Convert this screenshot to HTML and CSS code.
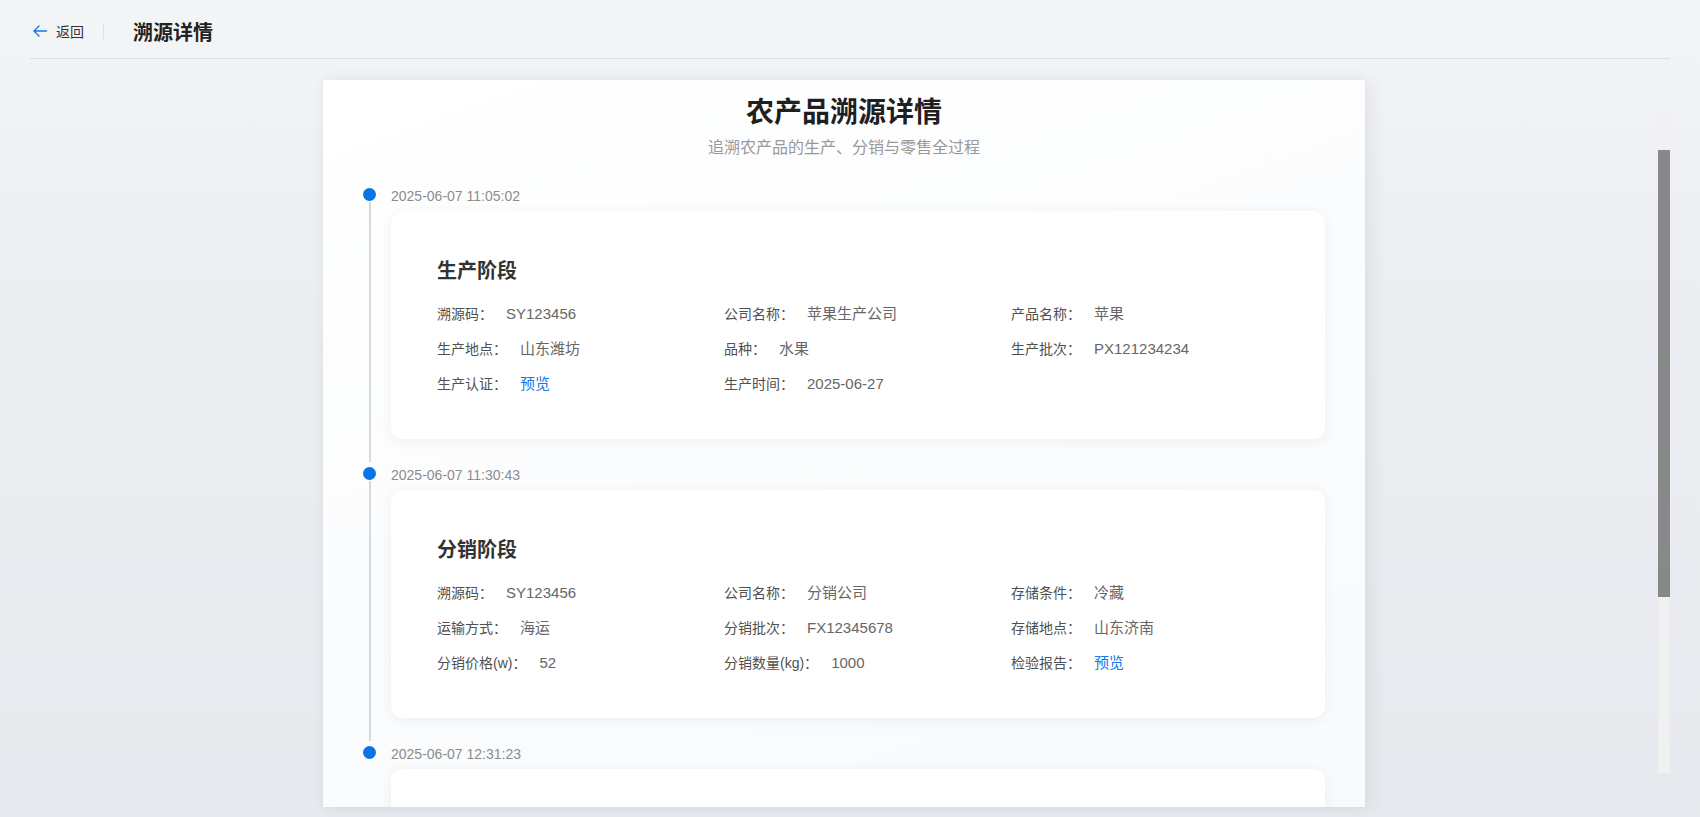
FILE: index.html
```html
<!DOCTYPE html>
<html lang="zh-CN">
<head>
<meta charset="utf-8">
<title>溯源详情</title>
<link rel="stylesheet" href="styles.css">
</head>
<body>
<div class="page">
  <header class="topbar">
    <a class="back">
      <svg class="back-icon" viewBox="0 0 16 16" width="16" height="16"><path d="M14.5 8H2M7 3L2 8l5 5" fill="none" stroke="#1677e6" stroke-width="1.4" stroke-linecap="round" stroke-linejoin="round"/></svg>
      <span class="back-text">返回</span>
    </a>
    <span class="divider"></span>
    <h1 class="page-title">溯源详情</h1>
  </header>
  <main class="main">
    <div class="stage">
      <section class="panel">
        <h2 class="panel-title">农产品溯源详情</h2>
        <p class="panel-sub">追溯农产品的生产、分销与零售全过程</p>
        <div class="timeline">
          <div class="tl-item">
            <div class="tl-axis"><span class="tl-dot"></span><span class="tl-line"></span></div>
            <div class="tl-body">
              <div class="tl-time">2025-06-07 11:05:02</div>
              <div class="card">
                <h3 class="card-title">生产阶段</h3>
                <div class="fields">
                  <div class="field"><span class="label">溯源码：</span><span class="value">SY123456</span></div>
                  <div class="field"><span class="label">公司名称：</span><span class="value">苹果生产公司</span></div>
                  <div class="field"><span class="label">产品名称：</span><span class="value">苹果</span></div>
                  <div class="field"><span class="label">生产地点：</span><span class="value">山东潍坊</span></div>
                  <div class="field"><span class="label">品种：</span><span class="value">水果</span></div>
                  <div class="field"><span class="label">生产批次：</span><span class="value">PX121234234</span></div>
                  <div class="field"><span class="label">生产认证：</span><span class="value link">预览</span></div>
                  <div class="field"><span class="label">生产时间：</span><span class="value">2025-06-27</span></div>
                </div>
              </div>
            </div>
          </div>
          <div class="tl-item">
            <div class="tl-axis"><span class="tl-dot"></span><span class="tl-line"></span></div>
            <div class="tl-body">
              <div class="tl-time">2025-06-07 11:30:43</div>
              <div class="card">
                <h3 class="card-title">分销阶段</h3>
                <div class="fields">
                  <div class="field"><span class="label">溯源码：</span><span class="value">SY123456</span></div>
                  <div class="field"><span class="label">公司名称：</span><span class="value">分销公司</span></div>
                  <div class="field"><span class="label">存储条件：</span><span class="value">冷藏</span></div>
                  <div class="field"><span class="label">运输方式：</span><span class="value">海运</span></div>
                  <div class="field"><span class="label">分销批次：</span><span class="value">FX12345678</span></div>
                  <div class="field"><span class="label">存储地点：</span><span class="value">山东济南</span></div>
                  <div class="field"><span class="label">分销价格(w)：</span><span class="value">52</span></div>
                  <div class="field"><span class="label">分销数量(kg)：</span><span class="value">1000</span></div>
                  <div class="field"><span class="label">检验报告：</span><span class="value link">预览</span></div>
                </div>
              </div>
            </div>
          </div>
          <div class="tl-item tl-last">
            <div class="tl-axis"><span class="tl-dot"></span></div>
            <div class="tl-body">
              <div class="tl-time">2025-06-07 12:31:23</div>
              <div class="card card-tail"></div>
            </div>
          </div>
        </div>
      </section>
    </div>
    <div class="scrollbar"><span class="thumb"></span></div>
  </main>
</div>
</body>
</html>
```
FILE: styles.css
```css
* { box-sizing: border-box; }
html, body { margin: 0; padding: 0; }
body {
  width: 1700px;
  height: 817px;
  overflow: hidden;
  font-family: "Liberation Sans", "Noto Sans CJK SC", sans-serif;
  background: linear-gradient(180deg, #f4f5f7 0%, #eceef2 30%, #e6e9ed 100%);
  color: #333;
}
.page {
  padding: 0 30px;
  height: 817px;
  display: flex;
  flex-direction: column;
}
.topbar {
  height: 59px;
  flex: none;
  display: flex;
  align-items: center;
  padding: 4px 0 0 2px;
  border-bottom: 1px solid #dcdfe4;
}
.back {
  display: flex;
  align-items: center;
  gap: 8px;
  cursor: pointer;
}
.back-icon { display: block; }
.back-text { font-size: 14px; color: #333; }
.divider {
  width: 1px;
  height: 16px;
  background: #dcdfe6;
  margin: 0 29px 0 19px;
}
.page-title {
  margin: 0;
  font-size: 20px;
  font-weight: 700;
  color: #222;
}
.main {
  flex: 1;
  display: flex;
  align-items: center;
  padding-top: 11px;
  min-height: 0;
}
.stage {
  flex: 1;
  display: flex;
  justify-content: center;
  align-items: center;
}
.panel {
  width: 1042px;
  height: 727px;
  overflow: hidden;
  background: linear-gradient(160deg, #ffffff 0%, #fbfcfd 50%, #f9fafb 100%);
  box-shadow: 6px 0 16px rgba(40, 50, 70, 0.07), -2px 0 10px rgba(40, 50, 70, 0.03);
  padding: 0 40px;
}
.panel-title {
  margin: 15px 0 0;
  text-align: center;
  font-size: 28px;
  line-height: 36px;
  font-weight: 700;
  color: #1f1f1f;
}
.panel-sub {
  margin: 6px 0 0;
  text-align: center;
  font-size: 16px;
  line-height: 22px;
  color: #999;
}
.timeline { margin-top: 29px; }
.tl-item { display: flex; }
.tl-axis {
  width: 28px;
  flex: none;
  display: flex;
  flex-direction: column;
  padding-top: 0;
}
.tl-dot {
  width: 13px;
  height: 13px;
  border-radius: 50%;
  background: #0a74e6;
  flex: none;
}
.tl-line {
  flex: 1;
  width: 2px;
  margin: 1px 0 5px 5.5px;
  background: #d6d8dc;
}
.tl-body { flex: 1; padding-bottom: 28px; }
.tl-time {
  font-size: 14px;
  line-height: 17px;
  height: 17px;
  color: #8c8c8c;
  margin-bottom: 6px;
}
.card {
  background: #fff;
  border-radius: 12px;
  box-shadow: 0 2px 14px rgba(0, 0, 0, 0.06);
  padding: 46px 25px 38px 46px;
}
.card-tail { height: 228px; }
.card-title {
  margin: 0;
  font-size: 20px;
  line-height: 28px;
  height: 28px;
  font-weight: 700;
  color: #333;
}
.fields {
  margin-top: 11px;
  display: grid;
  grid-template-columns: repeat(3, 287px);
  grid-auto-rows: 35px;
}
.field {
  font-size: 14px;
  height: 35px;
  display: flex;
  align-items: center;
  white-space: nowrap;
}
.label { color: #505050; margin-right: 13px; line-height: 20px; }
.value { color: #666; font-size: 15px; line-height: 20px; }
.value.link { color: #1677e6; cursor: pointer; }
.scrollbar {
  width: 12px;
  height: 659px;
  flex: none;
  background: #f1f1f1;
  padding-top: 36px;
  display: flex;
  flex-direction: column;
}
.thumb {
  display: block;
  height: 447px;
  background: #888;
}
```
